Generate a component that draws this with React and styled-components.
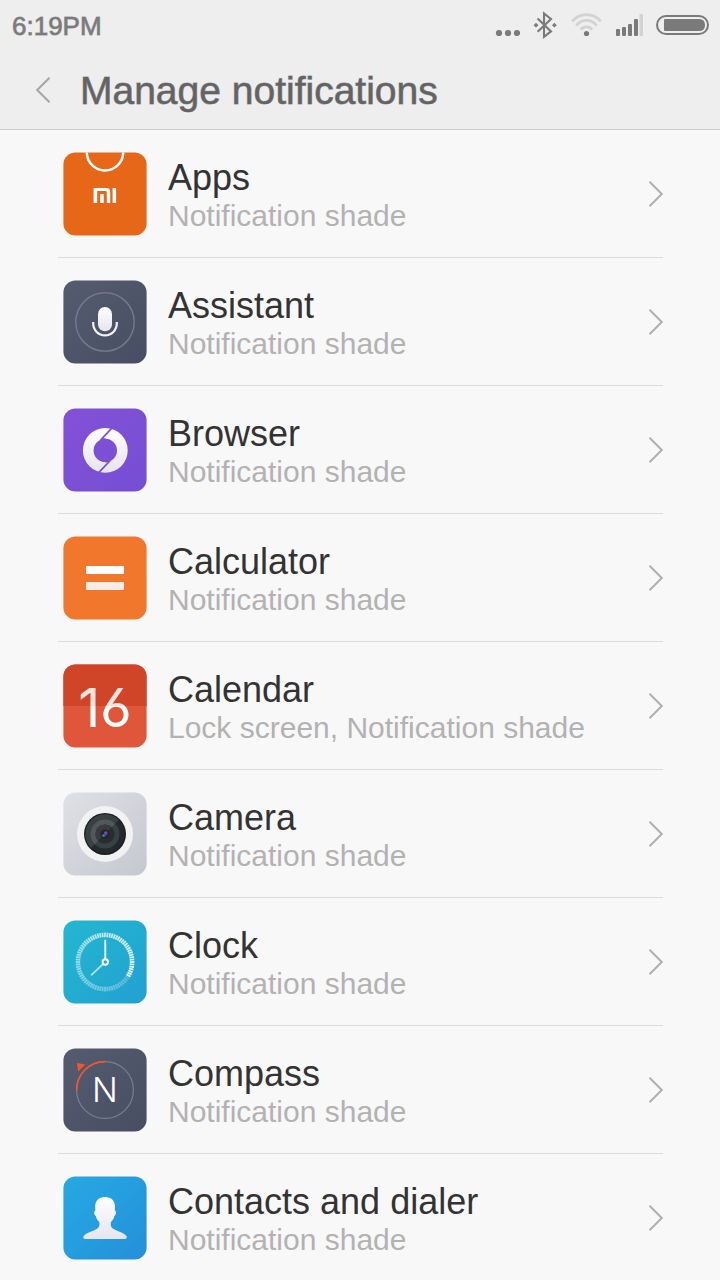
import React from 'react';
import styled, { createGlobalStyle } from 'styled-components';

const GlobalStyle = createGlobalStyle`
  body {
    margin: 0;
    background-color: #f8f8f8;
    font-family: "Liberation Sans", Arial, sans-serif;
  }
`

const Header = styled.header`
  background-color: #eeeeee;
  border-bottom: solid 1px #cccccc;
`

const StatusBar = styled.div`
  display: flex;
  align-items: center;
  justify-content: space-between;
  height: 50px;
  padding: 0 10px 0 12px;
  color: #7a7a7a;
`

const Time = styled.time`
  padding: 2px 0 0;
  font-size: 26px;
  line-height: 30px;
  -webkit-text-stroke: 1px rgba(122, 122, 122, 0.7);
`

const StatusIcons = styled.div`
  display: flex;
  gap: 13px;
  svg {
    display: block;
    height: 28px;
  }
`

const TitleBar = styled.div`
  display: flex;
  align-items: center;
  height: 79px;
  padding: 0 36px;
  gap: 30px;
`

const BackButton = styled.button`
  display: block;
  padding: 0;
  border: none;
  background: transparent;
  color: #a6a6a6;
  cursor: pointer;
  svg {
    display: block;
  }
`

const Title = styled.h1`
  margin: 0;
  padding: 2px 0 0;
  font-size: 39px;
  font-weight: 400;
  line-height: 44px;
  color: #636363;
  -webkit-text-stroke: 1px rgba(99, 99, 99, 0.6);
`

const List = styled.ul`
  list-style: none;
  margin: 0;
  padding: 0 57px 0 58px;
`

const Row = styled.li`
  border-bottom: solid 1px #dcdcdc;
`

const RowLink = styled.a`
  display: flex;
  align-items: center;
  height: 127px;
  padding: 0 0 0 5px;
  gap: 21px;
  text-decoration: none;
  color: #b0b0b0;
  svg {
    display: block;
    flex: none;
  }
`

const RowText = styled.div`
  flex: 1 1 auto;
  min-width: 0;
  padding: 4px 0 0;
`

const Name = styled.div`
  font-size: 36px;
  line-height: 40px;
  color: #333333;
`

const Places = styled.div`
  font-size: 30px;
  line-height: 36px;
  color: #b2b2b2;
`

const Chevron = ({ back }) => (
  <svg width="14" height="26" viewBox="0 0 14 26" fill="none" stroke="currentColor" strokeWidth="2" aria-hidden="true">
    <path d={back ? 'M13.5 .8 L1.2 13 L13.5 25.2' : 'M.5 .8 L12.8 13 L.5 25.2'} />
  </svg>
)

const Gradient = ({ id, from, to, vertical }) => (
  <linearGradient id={id} x1="0" y1="0" x2={vertical ? 0 : 1} y2="1">
    <stop offset="0" stopColor={from} />
    <stop offset="1" stopColor={to} />
  </linearGradient>
)

// rounded tile shared by all app icons
const Tile = ({ id, from, to, children }) => (
  <svg width="84" height="84" viewBox="0 0 84 84" aria-hidden="true">
    <defs>
      <Gradient id={`${id}-bg`} from={from} to={to || from} />
      <Gradient id={`${id}-fg`} from="#ffffff" to="#e6e4ee" vertical />
      <clipPath id={`${id}-clip`}>
        <rect x=".4" y=".4" width="83.2" height="83.2" rx="12" />
      </clipPath>
    </defs>
    <g clipPath={`url(#${id}-clip)`}>
      <rect width="84" height="84" fill={`url(#${id}-bg)`} />
      {children}
    </g>
  </svg>
)

const AppsIcon = () => (
  <Tile id="apps" from="#e66718">
    <circle cx="42" cy=".3" r="18.2" fill="none" stroke="#fff" strokeWidth="2.5" />
    <path d="M30.6 36 H43.6 Q47.2 36 47.2 39.6 V51 H43.8 V40.2 Q43.8 39 42.6 39 H34.2 V51 H30.6 Z" fill="#fff" />
    <rect x="37.2" y="42" width="3.5" height="9" fill="#fff" />
    <rect x="49.6" y="36" width="3.5" height="15" fill="#fff" />
  </Tile>
)

const AssistantIcon = () => (
  <Tile id="assistant" from="#555c70" to="#474d62">
    <circle cx="42" cy="42" r="29.2" fill="none" stroke="#73788a" strokeWidth="1.5" />
    <rect x="35" y="27" width="14" height="24.3" rx="7" fill="url(#assistant-fg)" />
    <path d="M30.2 42 V43.6 A11.8 11.8 0 0 0 53.8 43.6 V42" fill="none" stroke="#f4f4f6" strokeWidth="2.2" />
  </Tile>
)

const BrowserIcon = () => (
  <Tile id="browser" from="#8351d7" to="#754fd3">
    <circle cx="42.3" cy="42.4" r="22.4" fill="url(#browser-fg)" />
    <circle cx="42.3" cy="42.4" r="11.7" fill="#7b50d5" />
    <path d="M49.8 19.2 L38.6 31 L42.6 31.4" fill="none" stroke="#7b50d5" strokeWidth="1.8" />
    <path d="M34.8 65.6 L46 53.8 L42 53.4" fill="none" stroke="#7b50d5" strokeWidth="1.8" />
  </Tile>
)

const CalculatorIcon = () => (
  <Tile id="calculator" from="#f1772c">
    <rect x="23" y="30" width="38" height="8" rx="1" fill="#fff" />
    <rect x="23" y="46" width="38" height="8" rx="1" fill="#f9ebe6" />
  </Tile>
)

const CalendarIcon = () => (
  <Tile id="calendar" from="#e0563a">
    <defs>
      <linearGradient id="calendar-day" gradientUnits="userSpaceOnUse" x1="0" y1="0" x2="0" y2="84">
        <stop offset=".5" stopColor="#fae3dc" />
        <stop offset=".5" stopColor="#ffffff" />
      </linearGradient>
    </defs>
    <rect width="84" height="42" fill="#d04527" />
    <text
      x="42"
      y="63"
      textAnchor="middle"
      fontFamily="Inter, sans-serif"
      fontSize="54"
      fontWeight="400"
      fill="url(#calendar-day)"
      style={{ fontFeatureSettings: '"cv03"' }}
    >
      16
    </text>
  </Tile>
)

const CameraIcon = () => (
  <Tile id="camera" from="#e0e1e6" to="#c5c7cf">
    <circle cx="42" cy="42" r="28" fill="#f2f2f2" />
    <circle cx="42" cy="42" r="21" fill="#1b1f21" />
    <circle cx="42" cy="42" r="19.6" fill="#23292c" />
    <path d="M28.1 55.9 A19.6 19.6 0 0 1 55.9 28.1 Z" fill="#394143" />
    <circle cx="42" cy="42" r="14.4" fill="#394043" />
    <path d="M31.8 52.2 A14.4 14.4 0 0 1 52.2 31.8 Z" fill="#515859" />
    <circle cx="42" cy="42" r="9.6" fill="#292c2f" />
    <path d="M35.2 48.8 A9.6 9.6 0 0 1 48.8 35.2 Z" fill="#383c3e" />
    <circle cx="42" cy="42" r="4.6" fill="#25232c" />
    <circle cx="42.8" cy="41" r="1.8" fill="#7845c8" />
    <circle cx="40.6" cy="43.6" r="1.4" fill="#1f9c8c" />
    <circle cx="42.6" cy="42.8" r=".9" fill="#3b55d8" />
  </Tile>
)

const ticks = Array.from({ length: 72 }, (_, i) => i * 5)

const ClockIcon = () => (
  <Tile id="clock" from="#23b8cf" to="#22a0d2">
    {ticks.map(angle => (
      <path
        key={angle}
        d="M42 12.6 V17.2"
        stroke="#fff"
        strokeWidth="1.8"
        opacity={0.25 + 0.7 * (((angle + 235) % 360) / 360)}
        transform={`rotate(${angle} 42 42)`}
      />
    ))}
    <path d="M42.3 19.8 V39" stroke="#fff" strokeWidth="1.8" />
    <path d="M28 55.4 L40 44.2" stroke="#fff" strokeWidth="1.8" opacity=".65" />
    <circle cx="42.3" cy="42" r="2.7" fill="none" stroke="#fff" strokeWidth="2" />
  </Tile>
)

const CompassIcon = () => (
  <Tile id="compass" from="#555c70" to="#474d62">
    <circle cx="42" cy="42" r="28.4" fill="none" stroke="#797e8f" strokeWidth="1.2" />
    <path d="M13.6 43 A28.4 28.4 0 0 1 42 13.6" fill="none" stroke="#f4562c" strokeWidth="1.6" />
    <path d="M14 15 L22.4 16.4 L15.2 23.4 Z" fill="#f4562c" />
    <text x="42" y="54" textAnchor="middle" fontFamily="Inter, sans-serif" fontSize="34" fontWeight="300" fill="#ffffff">
      N
    </text>
  </Tile>
)

const ContactsIcon = () => (
  <Tile id="contacts" from="#25aae1" to="#258fdb">
    <path
      d="M42 21 C48.6 21 52.2 25 52 31 L51.8 34.6 C53.6 34.8 53.2 39.4 51.4 40 C50.8 43 49.8 44 48.2 45.8 C47.4 47 47.6 49.4 48.4 51 C51 55 62.6 56.4 63.7 60.6 V61.6 Q63.7 62.9 62.4 62.9 H21.8 Q20.4 62.9 20.4 61.6 V60.6 C21.6 56.4 33.4 55 35.8 51 C36.6 49.4 36.8 47 36 45.8 C34.4 44 33.4 43 32.8 40 C31 39.4 30.6 34.8 32.4 34.6 L32.2 31 C32 25 35.6 21 42 21 Z"
      fill="url(#contacts-fg)"
    />
  </Tile>
)

const apps = [
  { name: 'Apps', places: 'Notification shade', Icon: AppsIcon },
  { name: 'Assistant', places: 'Notification shade', Icon: AssistantIcon },
  { name: 'Browser', places: 'Notification shade', Icon: BrowserIcon },
  { name: 'Calculator', places: 'Notification shade', Icon: CalculatorIcon },
  { name: 'Calendar', places: 'Lock screen, Notification shade', Icon: CalendarIcon },
  { name: 'Camera', places: 'Notification shade', Icon: CameraIcon },
  { name: 'Clock', places: 'Notification shade', Icon: ClockIcon },
  { name: 'Compass', places: 'Notification shade', Icon: CompassIcon },
  { name: 'Contacts and dialer', places: 'Notification shade', Icon: ContactsIcon },
]

const StatusIconSet = () => (
  <StatusIcons aria-hidden="true">
    <svg width="26" viewBox="0 0 26 28" fill="currentColor">
      <circle cx="5" cy="22" r="3.1" />
      <circle cx="14" cy="22" r="3.1" />
      <circle cx="23" cy="22" r="3.1" />
    </svg>
    <svg width="24" viewBox="0 0 24 28" fill="none" stroke="currentColor" strokeWidth="2.1">
      <path d="M4.6 7.6 L18 20.4 L11 25.8 V2.4 L18 8 L4.6 20.8" />
      <path d="M3 11.8 L5.4 14.2 L3 16.6 L.6 14.2 Z M21.4 11.8 L23.8 14.2 L21.4 16.6 L19 14.2 Z" fill="currentColor" stroke="none" />
    </svg>
    <svg width="32" viewBox="0 0 32 28" fill="none" stroke="#d2d2d2" strokeWidth="2.7">
      <path d="M2.2 10.4 A18.6 18.6 0 0 1 30.8 10.4" />
      <path d="M6.4 14.6 A12.4 12.4 0 0 1 26.6 14.6" />
      <path d="M10.8 18.6 A7.2 7.2 0 0 1 22.2 18.6" />
      <circle cx="16.5" cy="22.5" r="2.6" fill="#7a7a7a" stroke="none" />
    </svg>
    <svg width="28" viewBox="0 0 28 28" fill="currentColor">
      <rect x="1" y="18" width="4" height="7" rx="1" />
      <rect x="7" y="16" width="4" height="9" rx="1" />
      <rect x="13" y="13" width="4" height="12" rx="1" />
      <rect x="19" y="8" width="4" height="17" rx="1" />
      <rect x="24.5" y="3" width="3.5" height="22" rx="1" fill="#d2d2d2" />
    </svg>
    <svg width="54" viewBox="0 0 54 28" fill="none">
      <rect x="1" y="5" width="51" height="18" rx="9" stroke="currentColor" strokeWidth="2" />
      <path d="M9 8 H43 Q49 8 49 14 Q49 20 43 20 H9 Q8 20 8 19 V9 Q8 8 9 8 Z" fill="currentColor" />
    </svg>
  </StatusIcons>
)

const App = () => {
  return (
    <>
      <GlobalStyle />
      <Header>
        <StatusBar>
          <Time>6:19PM</Time>
          <StatusIconSet />
        </StatusBar>
        <TitleBar>
          <BackButton type="button" aria-label="Back">
            <Chevron back />
          </BackButton>
          <Title>Manage notifications</Title>
        </TitleBar>
      </Header>
      <main>
        <List>
          {apps.map(({ name, places, Icon }) => (
            <Row key={name}>
              <RowLink href="#">
                <Icon />
                <RowText>
                  <Name>{name}</Name>
                  <Places>{places}</Places>
                </RowText>
                <Chevron />
              </RowLink>
            </Row>
          ))}
        </List>
      </main>
    </>
  )
};

export default App;
